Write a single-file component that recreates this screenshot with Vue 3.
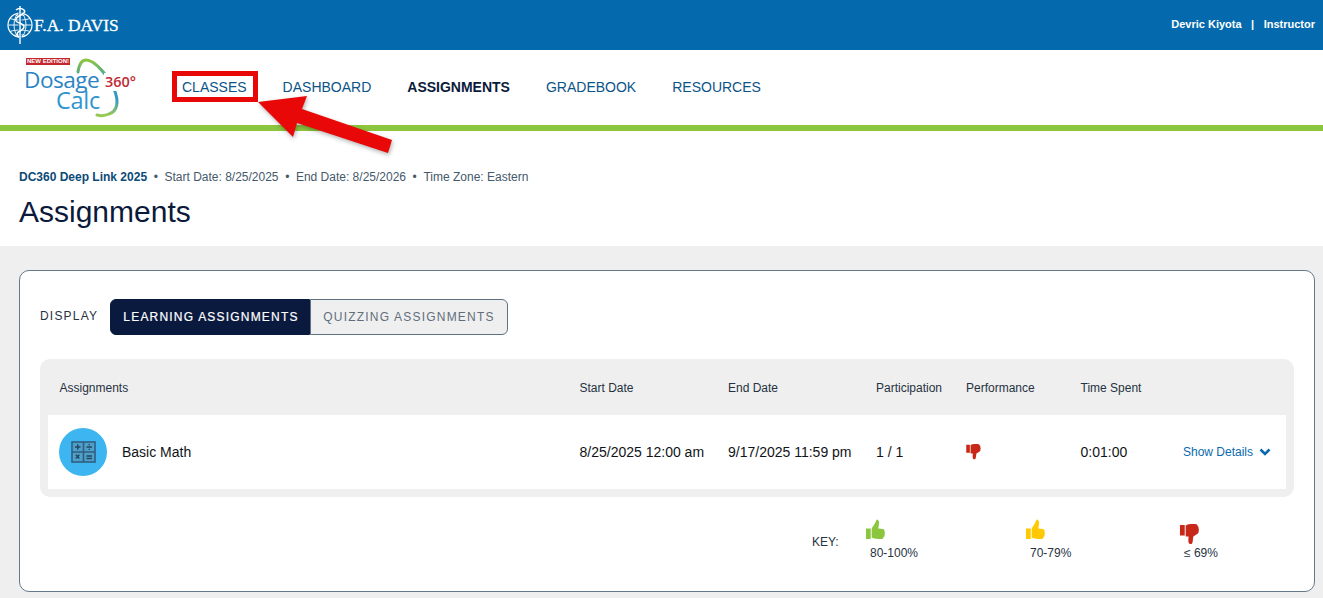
<script setup>
const columns = ['Assignments', 'Start Date', 'End Date', 'Participation', 'Performance', 'Time Spent', '']
const navItems = [
  { label: 'CLASSES', cls: 'nav-classes' },
  { label: 'DASHBOARD', cls: '' },
  { label: 'ASSIGNMENTS', cls: 'active' },
  { label: 'GRADEBOOK', cls: '' },
  { label: 'RESOURCES', cls: '' }
]
const keyItems = [
  { label: '80-100%', cls: 'key-green', up: true },
  { label: '70-79%', cls: 'key-yellow', up: true },
  { label: '≤ 69%', cls: 'key-red', up: false }
]
</script>

<template>
  <div class="page">
    <header class="topbar">
      <div class="brand">
        <svg class="globe" width="26" height="38" viewBox="0 0 26 38" fill="none" stroke="#fff">
          <circle cx="13" cy="19" r="12" stroke-width="1.200" />
          <ellipse cx="13" cy="19" rx="6" ry="12" stroke-width=".9" />
          <path d="M3 12.500c5 2 15 2 20 0M1.500 19h23M3 25.500c5-2 15-2 20 0M7 8.500c3 1 9 1 12 0M7 29.500c3-1 9-1 12 0" stroke-width=".9" />
          <path d="M13 0v38" stroke="#046aad" stroke-width="3" />
          <path d="M13 0v38" stroke-width="1.400" />
          <path d="M9 4c2-2 6-2 8 0s-1 4-4 5.500-5 3.500-4 5.500 8 2.500 8 5.500-3 4-5 5-3 3 0 6" stroke-width="1.500" />
        </svg>
        <span class="brand-name">F.A. DAVIS</span>
      </div>
      <div class="user"><span>Devric Kiyota</span><span class="sep">|</span><span>Instructor</span></div>
    </header>

    <nav class="navbar">
      <div class="logo">
        <svg class="logo-arc" width="50" height="62" viewBox="0 0 50 62" fill="none">
          <defs>
            <linearGradient id="arc" x1="0" y1="0" x2="0" y2="1">
              <stop offset="0" stop-color="#8cc63f" />
              <stop offset="0.35" stop-color="#3f9fa8" />
              <stop offset="0.7" stop-color="#2f97c9" />
              <stop offset="1" stop-color="#9ccb52" />
            </linearGradient>
          </defs>
          <path d="M7 14C8 7 10 2 15 2C24 2 37 18 43 31C48 43 47 53 38 56C34 58 30 58 26 57" stroke="url(#arc)" stroke-width="3" stroke-linecap="round" />
        </svg>
        <span class="logo-badge">NEW EDITION!</span>
        <span class="logo-dosage">Dosage</span>
        <span class="logo-calc">Calc</span>
        <span class="logo-360">360°</span>
      </div>
      <ul class="nav-list">
        <li v-for="item in navItems" :key="item.label" :class="item.cls">{{ item.label }}</li>
      </ul>
    </nav>

    <section class="intro">
      <p class="meta">
        <strong>DC360 Deep Link 2025</strong>
        <span>•</span><span>Start Date: 8/25/2025</span>
        <span>•</span><span>End Date: 8/25/2026</span>
        <span>•</span><span>Time Zone: Eastern</span>
      </p>
      <h1>Assignments</h1>
    </section>

    <main class="content">
      <div class="card">
        <div class="display">
          <span class="display-label">DISPLAY</span>
          <div class="toggle">
            <button class="tab tab-on">LEARNING ASSIGNMENTS</button>
            <button class="tab tab-off">QUIZZING ASSIGNMENTS</button>
          </div>
        </div>

        <div class="table">
          <div class="grid head">
            <div v-for="c in columns" :key="c">{{ c }}</div>
          </div>
          <div class="grid row">
            <div class="name">
              <span class="calc-icon">
                <svg width="25" height="22" viewBox="0 0 25 22" fill="none">
                  <rect x="1" y="1" width="23" height="20" fill="#4f9fcb" stroke="#2f5f80" stroke-width="1.600" />
                  <path d="M12.500 1v20M1 11h23" stroke="#2f5f80" stroke-width="1.600" />
                  <path d="M4 6h5.500M6.750 3.200v5.600M15.500 6h5.500M15.500 15h5.500M15.500 17.500h5.500M4.800 13.800l3.600 3.800M8.400 13.800l-3.600 3.800" stroke="#21485f" stroke-width="1.400" />
                  <path d="M18.250 3v1.300M18.250 7.700v1.300" stroke="#21485f" stroke-width="1.400" />
                </svg>
              </span>
              <span>Basic Math</span>
            </div>
            <div>8/25/2025 12:00 am</div>
            <div>9/17/2025 11:59 pm</div>
            <div>1 / 1</div>
            <div class="perf">
              <svg width="15" height="16" viewBox="0 0 20 22">
                <path fill="#c8281a" d="M0 1h5v11H0zM6 1.500C8 .5 10 0 13 0h3c1.500 0 2.500 1 2.500 2.200.8.500 1.200 1.500 1 2.600.5.600.5 1.800 0 2.600.3 1-.2 2.600-1.500 3.100l-4 2.500-.8 6c-.2 1.500-1.500 2.300-2.700 2-1.200-.5-1.800-2-1.700-3.500l.2-4.500H6z" />
              </svg>
            </div>
            <div>0:01:00</div>
            <a class="details">Show Details
              <svg width="12" height="8" viewBox="0 0 12 8" fill="none"><path d="M1.500 1.500 6 6l4.500-4.500" stroke="#0a6aae" stroke-width="2.600" /></svg>
            </a>
          </div>
        </div>

        <div class="key">
          <span class="key-label">KEY:</span>
          <div v-for="k in keyItems" :key="k.label" class="key-item" :class="k.cls">
            <svg v-if="k.up" width="21" height="21" viewBox="0 0 20 22">
              <path fill="currentColor" d="M0 10h5v11H0zM6 19.500c2 1 4 1.500 7 1.500h3c1.500 0 2.500-1 2.500-2.200.8-.5 1.200-1.500 1-2.600.5-.6.5-1.800 0-2.600.3-1-.2-2.600-1.500-3.100l-5-.5 .8-6c.2-1.500-1-3.500-2.500-3.500-1 2-1.500 3.500-2.500 5L6 10z" />
            </svg>
            <svg v-else width="21" height="21" viewBox="0 0 20 22">
              <path fill="currentColor" d="M0 1h5v11H0zM6 1.500C8 .5 10 0 13 0h3c1.500 0 2.500 1 2.500 2.200.8.500 1.200 1.500 1 2.600.5.600.5 1.800 0 2.600.3 1-.2 2.600-1.500 3.100l-4 2.500-.8 6c-.2 1.500-1.500 2.300-2.700 2-1.200-.5-1.800-2-1.700-3.500l.2-4.500H6z" />
            </svg>
            <span class="key-text">{{ k.label }}</span>
          </div>
        </div>
      </div>
    </main>

    <div class="callout-box"></div>
    <svg class="callout-arrow" width="150" height="70" viewBox="0 0 150 70">
      <polygon points="2,6 51,0 46,13 136,44 132,57 41,27 37,41" fill="#e80808" />
    </svg>
  </div>
</template>

<style>
html, body { margin: 0; background: #fff; }
</style>

<style scoped>
.page {
  position: relative;
  width: 1323px;
  height: 598px;
  overflow: hidden;
  background: #efefef;
  font-family: "Liberation Sans", Arial, sans-serif;
  color: #0b1a3a;
}
.topbar {
  height: 50px;
  background: #046aad;
  color: #fff;
  display: flex;
  align-items: center;
  justify-content: space-between;
  padding: 0 8px 0 7px;
}
.brand { display: flex; align-items: center; gap: 1px; }
.brand-name {
  font-family: "Liberation Serif", serif;
  font-size: 17.400px;
  font-weight: 400;
  -webkit-text-stroke: 0.300px #fff;
}
.user { display: flex; gap: 9.500px; font-size: 11px; font-weight: 700; margin-top: -3px; }
.navbar {
  height: 75px;
  background: #fff;
  border-bottom: 6px solid #8cc63f;
  display: flex;
  align-items: flex-start;
}
.logo { position: relative; width: 172px; height: 75px; flex: none; }
.logo-arc { position: absolute; left: 71px; top: 8px; }
.logo-badge {
  position: absolute; left: 26px; top: 8px;
  background: #c4262e; color: #fff;
  font-size: 6px; font-weight: 700; line-height: 7px;
  padding: 0 1px; white-space: nowrap;
}
.logo-dosage {
  position: absolute; left: 24px; top: 20px;
  font-family: "Open Sans", sans-serif; font-size: 22.600px; line-height: 20px;
  color: #2a83c4; letter-spacing: -0.500px;
}
.logo-calc {
  position: absolute; left: 56px; top: 40px;
  font-family: "Open Sans", sans-serif; font-size: 23.500px; line-height: 20px;
  color: #2f95cf; letter-spacing: -0.300px;
}
.logo-360 {
  position: absolute; left: 104px; top: 23px;
  font-family: "Open Sans", sans-serif; font-size: 14.500px; line-height: 18px;
  font-weight: 600; color: #c22b33; background: #fff; padding-left: 1px;
}
.nav-list {
  list-style: none; margin: -1px 0 0; padding: 0;
  display: flex; gap: 36px;
  height: 75px; align-items: center;
  font-size: 14px; color: #0c5488;
}
.nav-list li { white-space: nowrap; }
.nav-list .nav-classes { margin-left: 10px; }
.nav-list .active { font-weight: 700; color: #0b1a3a; }
.intro {
  height: 115px;
  background: #fff;
  padding: 39px 0 0 19px;
  box-sizing: border-box;
}
.meta {
  margin: 0; font-size: 12px; line-height: 14px; color: #45596b;
  display: flex; gap: 6.600px; height: 14px;
}
.meta strong { color: #0c4a77; }
h1 {
  margin: 10px 0 0; font-size: 30px; line-height: 36px; font-weight: 400; color: #0b1a3a;
}
.content { padding: 24px 8px 0 19px; }
.card {
  height: 322px;
  box-sizing: border-box;
  background: #fff;
  border: 1px solid #66798a;
  border-radius: 10px;
  padding: 28px 20px 0;
}
.display { display: flex; align-items: center; gap: 12px; height: 36px; }
.display-label { font-size: 12px; letter-spacing: 1.200px; color: #26323f; margin-top: -3px; width: 58px; }
.toggle { display: flex; height: 36px; }
.tab {
  font-family: inherit; font-size: 12px; letter-spacing: 1.200px; padding: 0; height: 36px;
  box-sizing: border-box; cursor: pointer;
}
.tab-on {
  width: 200px; background: #0a1a3f; color: #fff; border: 1px solid #0a1a3f;
  border-radius: 6px 0 0 6px; -webkit-text-stroke: 0.200px #fff; padding-left: 2px;
}
.tab-off {
  width: 198px; background: #efefef; color: #5f6e7c; border: 1px solid #5d7183;
  border-radius: 0 6px 6px 0;
}
.table {
  margin-top: 24px;
  background: #efefef;
  border-radius: 10px;
  height: 138px;
  padding: 0 8px;
  box-sizing: border-box;
}
.grid { display: grid; grid-template-columns: 531.500px 148.500px 148px 90px 114.500px 102.500px 1fr; align-items: center; }
.head { height: 56px; font-size: 12px; color: #26323f; padding-top: 1.500px; box-sizing: border-box; }
.head > :first-child { padding-left: 11.500px; }
.row { height: 74px; background: #fff; font-size: 14px; color: #101418; }
.name { display: flex; align-items: center; gap: 15px; padding-left: 11px; }
.calc-icon {
  width: 48px; height: 48px; border-radius: 50%; background: #3db5f0;
  display: flex; align-items: center; justify-content: center;
}
.perf { display: flex; }
.details {
  font-size: 12px; color: #0a6aae; display: flex; align-items: center; gap: 6px; white-space: nowrap;
}
.key { position: relative; height: 90px; display: flex; }
.key-label { position: absolute; left: 772px; top: 38px; font-size: 12px; color: #26323f; }
.key-item { position: absolute; top: 22px; display: flex; flex-direction: column; }
.key-text { font-size: 12px; color: #26323f; line-height: 14px; margin-top: 6px; margin-left: 5px; }
.key-green { left: 825px; color: #8cc63f; }
.key-yellow { left: 985px; color: #ffc800; }
.key-red { left: 1139px; color: #c8281a; top: 27px; }
.key-red .key-text { margin-left: 5px; margin-top: 1px; }
.callout-box {
  position: absolute; left: 172px; top: 71px; width: 86px; height: 31px;
  border: 5px solid #e80808; box-sizing: border-box;
}
.callout-arrow { position: absolute; left: 256px; top: 96px; filter: drop-shadow(1px 2px 2px rgba(0,0,0,.3)); }
</style>
